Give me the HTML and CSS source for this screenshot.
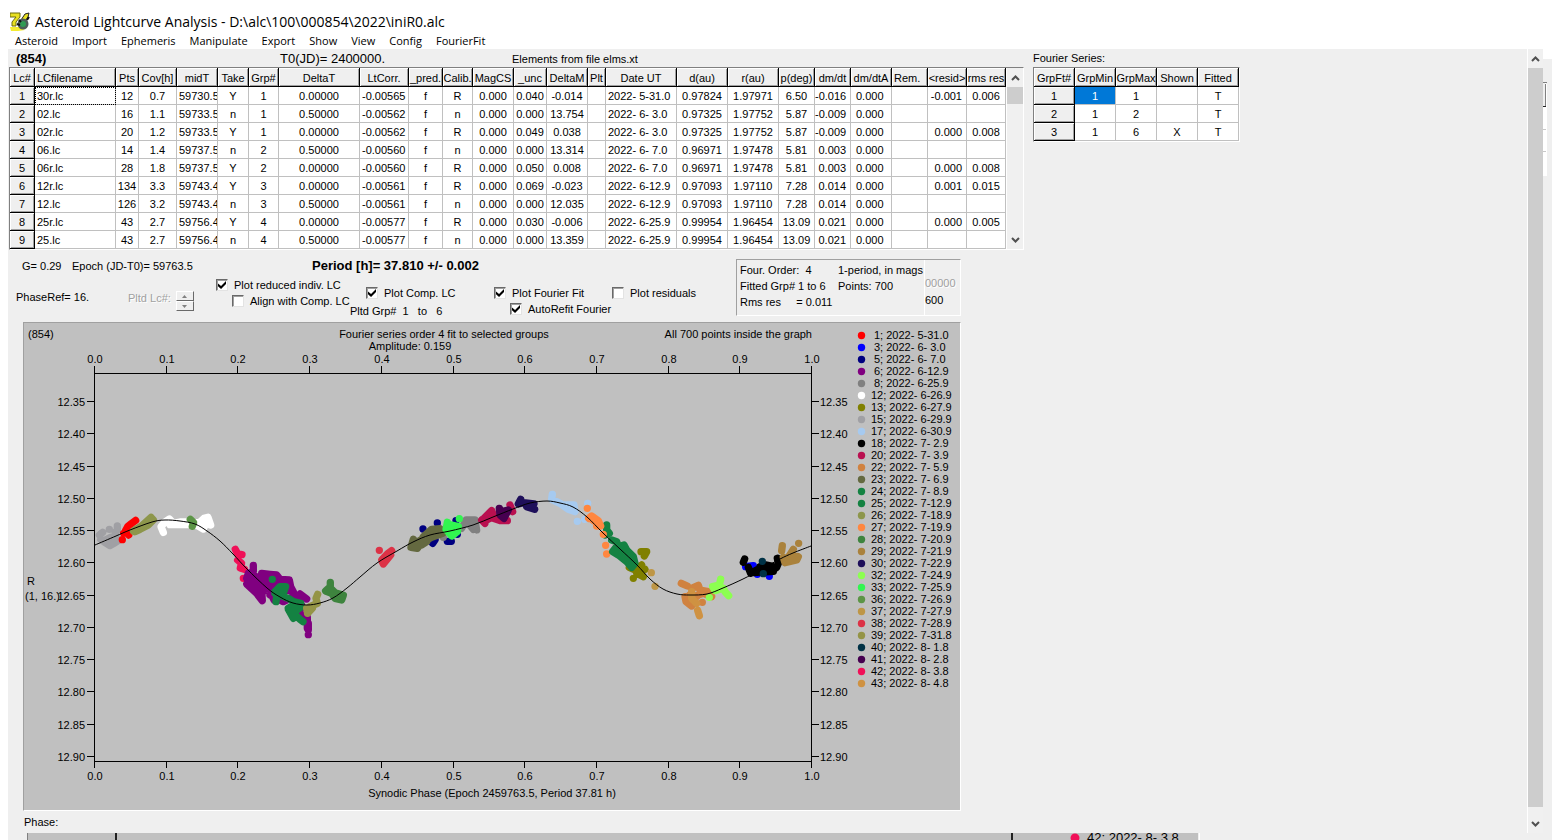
FILE: index.html
```html
<!DOCTYPE html>
<html lang="en">
<head>
<meta charset="utf-8">
<title>Asteroid Lightcurve Analysis</title>
<link rel="stylesheet" href="styles.css">
</head>
<body>
<header class="titlebar">
  <svg class="app-icon" width="20" height="20" viewBox="0 0 20 20" aria-hidden="true">
    <path d="M0 1h10v4L6 10v4H2v-4l4-5H0z" fill="#e8e020" stroke="#6b6a10"/>
    <path d="M0 15h9l6 3-7 1H1z" fill="#f4ec30"/>
    <path d="M11 8l4-6 4-1-1 4-3 4z" fill="#e8e020" stroke="#222"/>
    <circle cx="13" cy="12" r="5.500" fill="#4d5c58"/>
    <circle cx="13" cy="12" r="3" fill="#2f9a52"/>
    <path d="M9 8l2 2M17 8l2-3M7 12l3 1" stroke="#111" stroke-width="2"/>
  </svg>
  <h1>Asteroid Lightcurve Analysis - D:\alc\100\000854\2022\iniR0.alc</h1>
</header>
<nav class="menubar">
  <button>Asteroid</button><button>Import</button><button>Ephemeris</button><button>Manipulate</button><button>Export</button><button>Show</button><button>View</button><button>Config</button><button>FourierFit</button>
</nav>
<div class="window">
  <main class="client">
    <section class="work">
      <div class="summary">
        <strong>(854)</strong><span class="t0">T0(JD)= 2400000.</span><span>Elements from file elms.xt</span>
      </div>
      <div class="grid-frame">
        <table class="grid" id="curves"></table>
        <div class="scrollbar">
          <button class="arrow" aria-label="Scroll up"><svg width="9" height="6" viewBox="0 0 9 6"><path d="M1 5l3.500-3.500L8 5"/></svg></button>
          <div class="thumb short"></div>
          <button class="arrow last" aria-label="Scroll down"><svg width="9" height="6" viewBox="0 0 9 6"><path d="M1 1l3.500 3.500L8 1"/></svg></button>
        </div>
      </div>
      <div class="controls">
        <div class="settings">
          <div class="facts"><span>G= 0.29</span><span>Epoch (JD-T0)= 59763.5</span><strong>Period [h]= 37.810 +/- 0.002</strong></div>
          <div class="options">
            <div class="phase-ref">PhaseRef= 16.</div>
            <div class="stepper"><span>Pltd Lc#:</span>
              <div class="spin"><button disabled aria-label="Next curve"><svg width="5" height="3" viewBox="0 0 5 3"><path d="M0 3L2.500 0 5 3z"/></svg></button><button disabled aria-label="Previous curve"><svg width="5" height="3" viewBox="0 0 5 3"><path d="M0 0h5L2.500 3z"/></svg></button></div>
            </div>
            <div class="checks">
              <label><input type="checkbox" checked>Plot reduced indiv. LC</label>
              <label class="sub"><input type="checkbox">Align with Comp. LC</label>
            </div>
            <div class="checks low comp">
              <label class="sub"><input type="checkbox" checked>Plot Comp. LC</label>
              <span class="groups">Pltd Grp#&nbsp; 1 &nbsp; to &nbsp; 6</span>
            </div>
            <div class="checks low">
              <label><input type="checkbox" checked>Plot Fourier Fit</label>
              <label class="sub"><input type="checkbox" checked>AutoRefit Fourier</label>
            </div>
            <div class="checks low">
              <label><input type="checkbox">Plot residuals</label>
            </div>
          </div>
        </div>
        <div class="info">
          <div class="info-main">
            <span>Four. Order:&nbsp; 4</span><span>1-period, in mags</span>
            <span>Fitted Grp# 1 to 6</span><span>Points: 700</span>
            <span>Rms res &nbsp; &nbsp; = 0.011</span>
          </div>
          <div class="info-side"><span class="dim">00000</span><span>600</span></div>
        </div>
      </div>
      <div class="chart">
        <svg viewBox="24 323 936 487" id="plot" role="img" aria-label="Composite lightcurve">
          <text x="28" y="338">(854)</text>
          <text x="444" y="338" class="mid">Fourier series order 4 fit to selected groups</text>
          <text x="410" y="350" class="mid">Amplitude: 0.159</text>
          <text x="812" y="338" class="end">All 700 points inside the graph</text>
          <text x="492" y="797" class="mid">Synodic Phase (Epoch 2459763.5, Period 37.81 h)</text>
          <text x="27" y="585">R</text>
          <text x="25" y="600">(1, 16.)</text>
          <path class="axis" d="M94.500 366V768M811.500 366V768M94 373.500H812M94 761.500H812"/>
          <g id="ticks"></g>
          <g class="points" transform="translate(80 480) scale(.3333)">
            <path stroke="#a0a0a4" d="M58 165L68 157M62 178L76 188 90 197 102 190 118 180M70 183L92 172 105 183M88 148h0M112 138V150L105 157 108 165"/>
            <path stroke="#ff0000" d="M127 179h0M167 121L155 130 143 140 136 153 146 165M131 160L150 152"/>
            <path stroke="#8d964b" d="M160 153L185 138 213 112 220 120 205 135 180 148 165 155"/>
            <path stroke="#ffffff" d="M250 157L243 140 255 126 268 117 280 130 300 126 320 126M270 134L325 134M345 128L358 128 372 115 384 112 392 135M350 135L370 147 380 125"/>
            <path stroke="#5c9546" d="M331 118L341 128 337 139"/>
            <path stroke="#f01058" d="M466 208L473 222 486 224M473 240L485 250 481 264 493 268M490 295h0"/>
            <path stroke="#800080" d="M520 256V275L505 280 500 295 515 290 530 290 550 335 530 320 500 312 530 340 547 362 545 330 520 300M545 280L570 283 590 285 600 298 628 300 632 320 640 335 620 330 600 340M545 283L565 310 575 345 582 360M560 295L600 310 620 305M570 320L610 320M560 325L535 300M570 345L610 365 640 350M660 342L680 357M640 345L665 375 660 395M650 400L682 410V445M685 430V450M685 464h0"/>
            <path stroke="#148242" d="M577 298h0M585 335L600 320 617 320 610 340 590 350 588 365M585 340L625 355 640 365 662 370 655 385 625 388 640 415M640 375L625 385M635 395L660 418 669 425M665 380L645 395"/>
            <path stroke="#949446" d="M713 343L708 355 712 370 690 380 683 400 697 385M680 385L683 400"/>
            <path stroke="#3e843e" d="M751 307V320L737 333 755 340 765 355 785 360 790 346 765 338 752 325"/>
          </g>
          <g class="points" transform="translate(360 480) scale(.3333)">
            <path stroke="#dc3246" d="M58 211h0M95 212L82 222 65 240 70 252 92 225"/>
            <path stroke="#000080" d="M189 147h0M232 129h0M288 122h0M218 190L225 180M262 184h12M292 163h0"/>
            <path stroke="#808080" d="M250 172h0M305 145L318 120 345 120 350 150 325 130 340 148"/>
            <path stroke="#646940" d="M160 178L153 202 172 205 190 180 185 195 200 185M190 170L215 148 240 146 248 160 215 172 200 180M165 190L195 172M215 160L240 155"/>
            <path stroke="#32f550" d="M298 116h0M262 127L258 148 275 168 292 155 295 140 275 135 275 150"/>
            <path stroke="#b91050" d="M365 120L375 130 372 115 395 92 400 105 385 118M400 115L420 122 442 122M450 75L458 95"/>
            <path stroke="#460050" d="M418 85L420 105 432 115 445 90 425 95"/>
            <path stroke="#1e0f5a" d="M482 58L475 72 490 68 522 72 500 80 524 88"/>
            <path stroke="#a6caf0" d="M577 43L575 58 600 70 625 88 645 95 642 75 610 75M652 124h0M683 70h0M674 118h0"/>
            <path stroke="#148242" d="M740 135V150L748 160 735 165"/>
            <path stroke="#ff8740" d="M682 85h0M686 115L695 108 715 122 722 138 710 138M695 118L712 130M730 163h0M737 196h0M740 222h0"/>
          </g>
          <g class="points" transform="translate(600 480) scale(.3333)">
            <path stroke="#808000" d="M123 215L140 215 133 228M65 215L85 235M88 262L105 270 125 255M135 268L110 280 130 290M100 295h0"/>
            <path stroke="#148242" d="M35 180L50 185 55 200 72 195 80 210 100 230 105 250 95 262 80 245 55 225 38 215 50 200 70 215 90 235"/>
            <path stroke="#be9646" d="M154 278h0M165 319h0"/>
            <path stroke="#d08240" d="M244 310L262 318M275 325L295 316 300 330 325 335M335 350L310 340 280 350 255 350 258 365 275 378 270 345M290 350L300 340M307 367h0"/>
            <path stroke="#cf9242" d="M275 335L275 355 290 370M293 391L298 407"/>
            <path stroke="#8cff50" d="M362 298L358 315 338 320 345 332 370 325 375 335 386 347M328 352h0"/>
            <path stroke="#0000ff" d="M437 260L460 257M472 283h0M508 289h0"/>
            <path stroke="#000000" d="M434 237L430 247M445 262L452 280 480 265 515 272 530 262 535 250 532 235M460 278L520 274M480 260L500 255 515 258"/>
            <path stroke="#003246" d="M487 244h0M490 281h0"/>
            <path stroke="#aa823c" d="M596 190h0M547 197L545 212M550 232L555 248 590 240 595 230 570 225 580 208 560 240"/>
          </g>
          <path id="fit" class="fit"/>
          <g id="legend"></g>
        </svg>
      </div>
      <div class="phase">Phase:</div>
    </section>
    <section class="fourier">
      <div class="caption">Fourier Series:</div>
      <div class="grid-frame"><table class="grid" id="fits"></table></div>
    </section>
    <div class="scrollbar page-scroll">
      <button class="arrow" aria-label="Scroll up"><svg width="9" height="6" viewBox="0 0 9 6"><path d="M1 5l3.500-3.500L8 5"/></svg></button>
      <div class="thumb"></div>
      <button class="arrow last" aria-label="Scroll down"><svg width="9" height="6" viewBox="0 0 9 6"><path d="M1 1l3.500 3.500L8 1"/></svg></button>
    </div>
  </main>
  <aside class="behind">
    <svg width="9" height="125" viewBox="0 0 9 125" aria-hidden="true">
      <path fill="#fff" d="M0 24h3v92H0z"/><path fill="#efefef" d="M0 24h2v23H0z"/>
      <path fill="#808080" d="M0 23h4v1H0zM2 25h1v22H2z"/><path fill="#222" d="M0 47h3v1H0z"/>
      <path fill="#c8c8c8" d="M0 70h3v1H0zM0 92h3v1H0z"/><path fill="#fff" d="M3 25h1v92H0v-1h3z"/>
    </svg>
  </aside>
</div>
<footer class="under">
  <svg width="1174" height="8" viewBox="26 832 1174 8">
    <path fill="#c0c0c0" d="M27 832H1198V840H27z"/><path fill="#808080" d="M27 832h1v8h-1z"/><path fill="#fff" d="M1199 832h1v8h-1z"/>
    <path fill="#222" d="M115 832h2v8h-2zM1011 832h2v8h-2z"/>
    <circle cx="1075" cy="837" r="4.500" fill="#f01058"/>
    <text x="1087" y="841">42; 2022- 8- 3.8</text>
  </svg>
</footer>
<script src="app.js"></script>
</body>
</html>
```
FILE: styles.css
```css
* { box-sizing: border-box; }
body {
  margin: 0;
  min-height: 100vh;
  display: flex;
  flex-direction: column;
  overflow: hidden;
  background: #fff;
  color: #000;
  font: 11px/14px "Liberation Sans", Arial, sans-serif;
  white-space: nowrap;
}
button { border: 0; padding: 0; background: none; color: inherit; font: inherit; }
.titlebar { display: flex; align-items: center; gap: 5px; height: 33px; padding: 10px 10px 0; }
.titlebar h1 { margin: 0; font: 14px/20px "Open Sans", "Noto Sans", sans-serif; }
.menubar { display: flex; gap: 14px; height: 16px; padding-left: 15px; font: 11px/14px "Open Sans", "Noto Sans", sans-serif; }
.menubar button { height: 15px; }
.window { flex: 1; display: flex; padding-left: 8px; }
.client { flex: 1; display: flex; background: #efefef; }
.work { width: 1016px; flex: none; }
.summary { display: grid; grid-template-columns: 264px 232px 1fr; align-items: center; height: 18px; padding: 1px 0 0 8px; }
.summary strong, .summary .t0 { font-size: 13px; }
.caption { height: 18px; line-height: 18px; }
.grid-frame {
  display: flex;
  width: max-content;
  border: 1px solid;
  border-color: #808080 #fff #fff #808080;
  margin-left: 1px;
}
.grid { table-layout: fixed; border-spacing: 0; background: #fff; text-align: center; }
.grid th, .grid td {
  height: 18px;
  padding: 1px 0 0;
  overflow: hidden;
  line-height: 16px;
  border: solid #c0c0c0;
  border-width: 0 1px 1px 0;
}
.grid thead th { height: 19px; }
.grid th {
  font-weight: 400;
  background: #efefef;
  border-color: #000;
  box-shadow: inset 1px 1px #fff, inset -1px -1px #a0a0a0;
}
.grid .left { text-align: left; padding-left: 2px; }
.grid .inset { text-align: left; padding-left: 5px; }
.grid .right { text-align: right; padding-right: 4px; }
.grid td.focus { outline: 1px dotted #000; outline-offset: -1px; }
.grid td.picked { background: #0078d7; color: #fff; }
.scrollbar { display: flex; flex-direction: column; width: 17px; background: #f0f0f0; border-left: 1px solid #fff; }
.arrow { display: grid; place-items: center; height: 19px; }
.arrow.last { margin-top: auto; }
.arrow path { fill: none; stroke: #505050; stroke-width: 2; }
.thumb { flex: 1; background: #cdcdcd; }
.thumb.short { flex: none; height: 17px; }
.page-scroll { margin-left: auto; width: 16px; }
.page-scroll .last { height: 26px; padding-top: 8px; }
.controls { display: flex; height: 72px; }
.settings { width: 728px; flex: none; padding: 9px 0 0 8px; }
.facts { display: grid; grid-template-columns: 50px 240px 1fr; padding-left: 6px; height: 18px; }
.facts strong { font-size: 13px; }
.options { display: grid; grid-template-columns: 112px 88px 132px 146px 118px 1fr; }
.phase-ref { padding-top: 13px; }
.stepper { display: flex; gap: 5px; padding-top: 14px; color: #a0a0a0; text-shadow: 1px 1px #fff; }
.spin { display: flex; flex-direction: column; width: 18px; height: 20px; }
.spin button { flex: 1; display: grid; place-items: center; background: #efefef; border: 1px solid; border-color: #fff #696969 #696969 #fff; }
.spin path { fill: #808080; }
.checks { display: flex; flex-direction: column; }
.checks.low { padding-top: 8px; }
.checks.comp { padding-left: 2px; }
.checks label { display: flex; align-items: center; gap: 6px; height: 16px; }
.checks .sub { padding-left: 16px; }
.groups { padding-top: 3px; }
input[type="checkbox"] {
  appearance: none;
  flex: none;
  display: grid;
  place-items: center;
  width: 12px;
  height: 12px;
  margin: 0;
  background: #fff;
  border: 1px solid;
  border-color: #696969 #e3e3e3 #e3e3e3 #696969;
  box-shadow: inset 1px 1px #a0a0a0;
}
input[type="checkbox"]:checked::before {
  content: "";
  width: 8px;
  height: 8px;
  background: #000;
  clip-path: polygon(0 30%, 38% 62%, 100% 0, 100% 38%, 38% 100%, 0 66%);
}
.info { display: flex; width: 225px; height: 57px; margin-top: 9px; border: 1px solid; border-color: #a0a0a0 #fff #fff #a0a0a0; }
.info-main { display: grid; grid-template-columns: 98px 1fr; grid-auto-rows: 16px; width: 188px; padding: 3px 0 0 3px; border-right: 1px solid #fff; }
.info-side { display: flex; flex-direction: column; gap: 3px; padding-top: 16px; }
.dim { color: #a0a0a0; text-shadow: 1px 1px #fff; }
.chart { width: 938px; margin-left: 15px; border: 1px solid; border-color: #a0a0a0 #fff #fff #a0a0a0; background: #c0c0c0; }
.chart svg { display: block; width: 100%; }
.mid { text-anchor: middle; }
.end { text-anchor: end; }
.axis { fill: none; stroke: #000; shape-rendering: crispEdges; }
.points path { fill: none; stroke-width: 22; stroke-linecap: round; stroke-linejoin: round; }
.fit { fill: none; stroke: #000; }
.phase { height: 22px; padding: 4px 16px 0; }
.fourier { padding-left: 9px; }
.fourier .grid-frame { margin-left: 0; }
.behind { width: 9px; padding-top: 10px; background: linear-gradient(#fff 10px, #efefef 10px); }
.behind svg { display: block; }
.under { height: 8px; margin-left: 8px; padding-left: 18px; overflow: hidden; background: #efefef; }
.under svg { display: block; }
.under text { font-size: 13px; }
```
FILE: app.js
```js
const SVG = "http://www.w3.org/2000/svg";

function fillTable(id, columns, rows, mark) {
  const table = document.getElementById(id);
  table.style.width = columns.reduce((sum, c) => sum + c[1], 0) + "px";
  const head = table.createTHead().insertRow();
  for (const [label, width, align, headAlign] of columns) {
    const th = document.createElement("th");
    th.scope = "col";
    th.textContent = label;
    th.style.width = width + "px";
    if (headAlign) th.className = headAlign;
    head.append(th);
  }
  const body = table.createTBody();
  rows.forEach((row, r) => {
    const tr = body.insertRow();
    row.forEach((value, c) => {
      const cell = document.createElement(c === 0 ? "th" : "td");
      cell.textContent = value;
      if (columns[c][2]) cell.className = columns[c][2];
      if (r === 0 && c === 1) cell.classList.add(mark);
      tr.append(cell);
    });
  });
}

const curveColumns = [
  ["Lc#", 25], ["LCfilename", 81, "left", "left"], ["Pts", 23], ["Cov[h]", 38], ["midT", 41, "left"],
  ["Take", 31], ["Grp#", 30], ["DeltaT", 81], ["LtCorr.", 49, "left"], ["_pred.", 34], ["Calib.", 30],
  ["MagCS", 41], ["_unc", 33], ["DeltaM", 41], ["Plt", 18], ["Date UT", 71, "left"], ["d(au)", 51],
  ["r(au)", 51], ["p(deg)", 36], ["dm/dt", 36, "right"], ["dm/dtA", 41, "inset"], ["Rem.", 36, "", "left"],
  ["<resid>", 39, "right"], ["rms res", 39]
];
const curves = [
  "30r.lc|12|0.7|59730.5|Y|1|0.00000|-0.00565|f|R|0.000|0.040|-0.014||2022- 5-31.0|0.97824|1.97971|6.50|-0.016|0.000||-0.001|0.006",
  "02.lc|16|1.1|59733.5|n|1|0.50000|-0.00562|f|n|0.000|0.000|13.754||2022- 6- 3.0|0.97325|1.97752|5.87|-0.009|0.000|||",
  "02r.lc|20|1.2|59733.5|Y|1|0.00000|-0.00562|f|R|0.000|0.049|0.038||2022- 6- 3.0|0.97325|1.97752|5.87|-0.009|0.000||0.000|0.008",
  "06.lc|14|1.4|59737.5|n|2|0.50000|-0.00560|f|n|0.000|0.000|13.314||2022- 6- 7.0|0.96971|1.97478|5.81|0.003|0.000|||",
  "06r.lc|28|1.8|59737.5|Y|2|0.00000|-0.00560|f|R|0.000|0.050|0.008||2022- 6- 7.0|0.96971|1.97478|5.81|0.003|0.000||0.000|0.008",
  "12r.lc|134|3.3|59743.4|Y|3|0.00000|-0.00561|f|R|0.000|0.069|-0.023||2022- 6-12.9|0.97093|1.97110|7.28|0.014|0.000||0.001|0.015",
  "12.lc|126|3.2|59743.4|n|3|0.50000|-0.00561|f|n|0.000|0.000|12.035||2022- 6-12.9|0.97093|1.97110|7.28|0.014|0.000|||",
  "25r.lc|43|2.7|59756.4|Y|4|0.00000|-0.00577|f|R|0.000|0.030|-0.006||2022- 6-25.9|0.99954|1.96454|13.09|0.021|0.000||0.000|0.005",
  "25.lc|43|2.7|59756.4|n|4|0.50000|-0.00577|f|n|0.000|0.000|13.359||2022- 6-25.9|0.99954|1.96454|13.09|0.021|0.000|||"
].map((line, i) => [i + 1, ...line.split("|")]);
fillTable("curves", curveColumns, curves, "focus");

fillTable("fits",
  [["GrpFt#", 41], ["GrpMin", 41], ["GrpMax", 41], ["Shown", 41], ["Fitted", 41]],
  [[1, 1, 1, "", "T"], [2, 1, 2, "", "T"], [3, 1, 6, "X", "T"]], "picked");

function add(parent, tag, attrs, text) {
  const node = document.createElementNS(SVG, tag);
  for (const key in attrs) node.setAttribute(key, attrs[key]);
  if (text) node.textContent = text;
  parent.append(node);
}

const ticks = document.getElementById("ticks");
for (let i = 0; i <= 10; i++) {
  const x = Math.round(94 + i * 71.7);
  const label = (i / 10).toFixed(1);
  add(ticks, "path", { class: "axis", d: `M${x + 0.5} 366V373M${x + 0.5} 761V768` });
  add(ticks, "text", { class: "mid", x: x + 1, y: 363 }, label);
  add(ticks, "text", { class: "mid", x: x + 1, y: 780 }, label);
}
for (let i = 0; i < 12; i++) {
  const y = Math.round(401 + i * 32.27);
  const label = (12.35 + i * 0.05).toFixed(2);
  add(ticks, "path", { class: "axis", d: `M87 ${y + 0.5}H94M812 ${y + 0.5}H819` });
  add(ticks, "text", { class: "end", x: 85, y: y + 5 }, label);
  add(ticks, "text", { x: 820, y: y + 5 }, label);
}

const series = [
  ["1; 2022- 5-31.0", "#ff0000"], ["3; 2022- 6- 3.0", "#0000ff"], ["5; 2022- 6- 7.0", "#000080"],
  ["6; 2022- 6-12.9", "#800080"], ["8; 2022- 6-25.9", "#808080"], ["12; 2022- 6-26.9", "#ffffff"],
  ["13; 2022- 6-27.9", "#808000"], ["15; 2022- 6-29.9", "#a0a0a4"], ["17; 2022- 6-30.9", "#a6caf0"],
  ["18; 2022- 7- 2.9", "#000000"], ["20; 2022- 7- 3.9", "#b91050"], ["22; 2022- 7- 5.9", "#d08240"],
  ["23; 2022- 7- 6.9", "#646940"], ["24; 2022- 7- 8.9", "#148242"], ["25; 2022- 7-12.9", "#148242"],
  ["26; 2022- 7-18.9", "#8d964b"], ["27; 2022- 7-19.9", "#ff8740"], ["28; 2022- 7-20.9", "#3e843e"],
  ["29; 2022- 7-21.9", "#aa823c"], ["30; 2022- 7-22.9", "#1e0f5a"], ["32; 2022- 7-24.9", "#8cff50"],
  ["33; 2022- 7-25.9", "#32f550"], ["36; 2022- 7-26.9", "#5c9546"], ["37; 2022- 7-27.9", "#be9646"],
  ["38; 2022- 7-28.9", "#dc3246"], ["39; 2022- 7-31.8", "#949446"], ["40; 2022- 8- 1.8", "#003246"],
  ["41; 2022- 8- 2.8", "#460050"], ["42; 2022- 8- 3.8", "#f01058"], ["43; 2022- 8- 4.8", "#cf9242"]
];
const legend = document.getElementById("legend");
series.forEach(([label, color], i) => {
  add(legend, "circle", { cx: 861.5, cy: 335.5 + i * 12, r: 3.7, fill: color });
  add(legend, "text", { x: label[1] === ";" ? 874 : 871, y: 339 + i * 12 }, label);
});

/* Smooth curve through the sampled values of the Fourier fit. */
const fit = [
  [95, 545], [116, 536], [130, 530], [152, 522], [165, 520], [180, 521], [195, 524], [207, 531], [220, 541],
  [233, 554], [247, 569], [267, 588], [280, 597], [293, 603], [307, 605], [320, 603], [333, 598], [347, 588],
  [360, 577], [377, 563], [397, 551], [413, 542], [430, 535], [450, 531], [473, 525], [493, 517], [513, 509],
  [530, 503], [547, 501], [560, 503], [573, 507], [587, 517], [603, 533], [620, 549], [637, 565], [650, 579],
  [663, 589], [677, 594], [690, 595], [707, 594], [723, 588], [743, 579], [760, 570], [780, 559], [793, 553], [811, 546]
];
let d = `M${fit[0]}`;
for (let i = 0; i < fit.length - 1; i++) {
  const [a, b, c, e] = [fit[i - 1] || fit[i], fit[i], fit[i + 1], fit[i + 2] || fit[i + 1]];
  d += `C${b[0] + (c[0] - a[0]) / 6} ${b[1] + (c[1] - a[1]) / 6} ${c[0] - (e[0] - b[0]) / 6} ${c[1] - (e[1] - b[1]) / 6} ${c}`;
}
document.getElementById("fit").setAttribute("d", d);
```
